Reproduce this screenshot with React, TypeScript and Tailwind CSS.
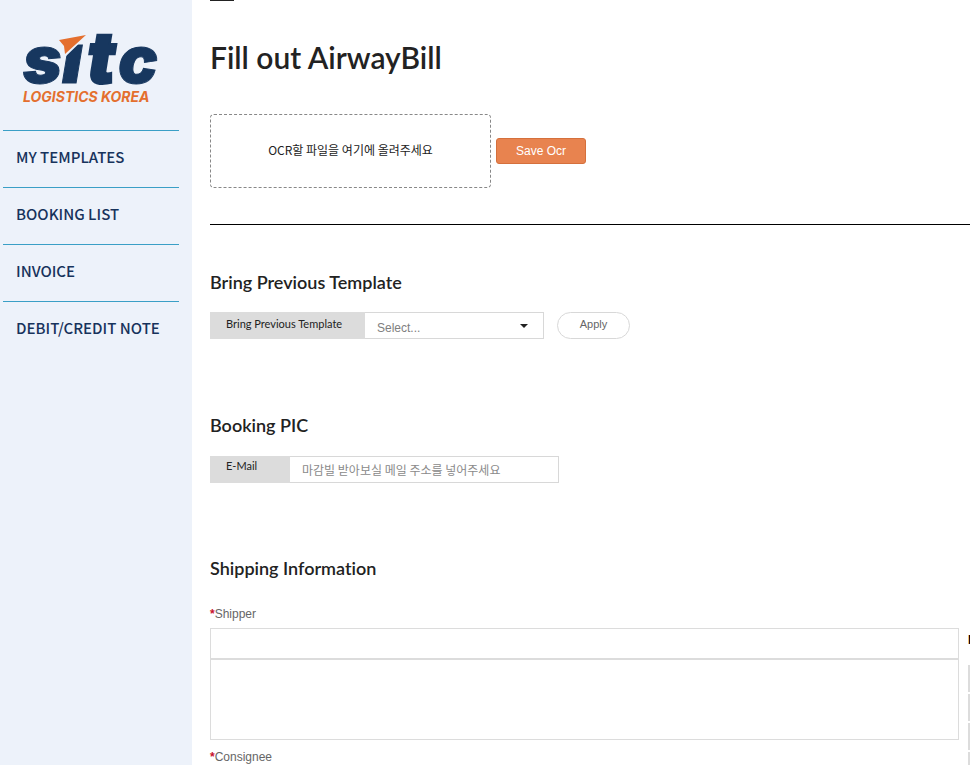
import { useState } from "react";

const menu = [
  { name: "MY TEMPLATES", href: "#templates" },
  { name: "BOOKING LIST", href: "#booking" },
  { name: "INVOICE", href: "#invoice" },
  { name: "DEBIT/CREDIT NOTE", href: "#note" },
];

export default function App() {
  return (
    <div className="flex h-screen overflow-hidden bg-white font-['Lato','Noto_Sans_CJK_KR',sans-serif] text-[#222] [font-variant-ligatures:none]">
      <Sidebar />
      <main className="min-w-0 flex-1 overflow-hidden pl-[18px]">
        <div className="h-px w-6 bg-[#222]" />
        <h1 className="mt-8 text-[30px] leading-[48px] font-semibold">Fill out AirwayBill</h1>
        <OcrUpload />
        <TemplatePicker />
        <BookingPic />
        <ShippingInfo />
      </main>
    </div>
  );
}

const Sidebar = () => {
  return (
    <aside className="w-48 shrink-0 bg-[#edf2fa]">
      <a href="#home" className="block px-5 pt-8" aria-label="SITC Logistics Korea">
        <Logo />
      </a>
      <nav className="mt-[22px] mr-[13px] ml-[3px]">
        {menu.map((item) => (
          <a
            key={item.name}
            href={item.href}
            className="block h-[57px] border-t border-[#3a9fc6] pl-[13px] font-['Noto_Sans_CJK_KR',sans-serif] text-[15px] leading-[52px] font-medium text-[#17335c]"
          >
            {item.name}
          </a>
        ))}
      </nav>
    </aside>
  );
};

const Logo = () => {
  return (
    <svg viewBox="0 0 140 76" className="h-[76px] w-[140px] overflow-visible">
      <g fill="#17375f" stroke="#17375f" strokeWidth="1" fontFamily="Inter, sans-serif" fontWeight="900" fontStyle="italic" fontSize="66">
        <text x="3" y="51">s</text>
        <text x="42" y="51" fontSize="70">ı</text>
        <text x="67" y="51" fontSize="71" strokeWidth="2">t</text>
        <text x="98" y="51">c</text>
      </g>
      <path d="M37 7L70 1L44 26L42 15Z" fill="#edf2fa" />
      <path d="M39 8L66 3L45 22L44 14Z" fill="#e46f2e" />
      <text x="3" y="70" fill="#e46f2e" fontFamily="Inter, sans-serif" fontWeight="700" fontStyle="italic" fontSize="14">
        LOGISTICS KOREA
      </text>
    </svg>
  );
};

const OcrUpload = () => {
  return (
    <section className="border-b border-black pt-[33px] pb-9">
      <div className="flex items-center gap-[5px]">
        <label className="flex h-[74px] w-[281px] cursor-pointer items-center justify-center rounded border border-dashed border-[#888] pb-[2px] font-['Noto_Sans_CJK_KR',sans-serif] text-xs">
          OCR할 파일을 여기에 올려주세요
          <input type="file" className="sr-only" />
        </label>
        <button className="h-[26px] w-[90px] rounded-[3px] border border-[#d5703c] bg-[#e8834f] font-['Liberation_Sans',sans-serif] text-xs text-white">
          Save Ocr
        </button>
      </div>
    </section>
  );
};

const TemplatePicker = () => {
  const [template, setTemplate] = useState("");

  return (
    <section className="pt-[43px]">
      <h2 className="text-lg leading-7 font-semibold">Bring Previous Template</h2>
      <div className="mt-4 flex">
        <label htmlFor="template" className="h-[27px] w-[155px] bg-[#dcdcdc] pl-4 text-[11px] leading-6">
          Bring Previous Template
        </label>
        <div className="relative">
          <select
            id="template"
            value={template}
            onChange={(e) => setTemplate(e.target.value)}
            className="h-[27px] w-[179px] appearance-none border border-l-0 border-[#d8d8d8] bg-white pt-1 pl-3 font-['Liberation_Sans',sans-serif] text-xs text-[#808080]"
          >
            <option value="">Select...</option>
          </select>
          <svg viewBox="0 0 8 4" className="pointer-events-none absolute top-3 right-4 h-1 w-2" fill="#222">
            <path d="M0 0h8L4 4z" />
          </svg>
        </div>
        <button className="ml-[13px] h-[27px] w-[73px] rounded-full border border-[#d8d8d8] pb-[2px] font-['Liberation_Sans',sans-serif] text-[11px] text-[#666]">
          Apply
        </button>
      </div>
    </section>
  );
};

const BookingPic = () => {
  return (
    <section className="pt-[72px]">
      <h2 className="text-lg leading-7 font-semibold">Booking PIC</h2>
      <div className="mt-[17px] flex">
        <label htmlFor="email" className="h-[27px] w-20 bg-[#dcdcdc] pl-4 text-[11px] leading-5">
          E-Mail
        </label>
        <input
          id="email"
          type="email"
          placeholder="마감빌 받아보실 메일 주소를 넣어주세요"
          className="h-[27px] w-[269px] border border-l-0 border-[#d8d8d8] px-3 font-['Noto_Sans_CJK_KR',sans-serif] text-xs placeholder:text-[#8a8a8a]"
        />
      </div>
    </section>
  );
};

const ShippingInfo = () => {
  return (
    <section className="pt-[71px]">
      <h2 className="text-lg leading-7 font-semibold">Shipping Information</h2>
      <div className="mt-[22px] flex gap-[9px] font-['Liberation_Sans',sans-serif]">
        <div className="min-w-0 flex-1">
          <Party id="shipper" label="Shipper" />
          <Party id="consignee" label="Consignee" />
        </div>
        <div className="w-[2px] shrink-0 overflow-hidden pt-7">
          <p className="text-xs leading-4 font-bold text-black">M</p>
          <div className="mt-[17px] flex flex-col gap-[2px]">
            {[1, 2, 3, 4].map((row) => (
              <div key={row} className="h-[27px] bg-[#dcdcdc]" />
            ))}
          </div>
        </div>
      </div>
    </section>
  );
};

const Party = ({ id, label }: { id: string; label: string }) => {
  return (
    <div className="pb-[7px]">
      <label htmlFor={id} className="block pb-1 text-xs leading-5 text-[#666]">
        <span className="font-bold text-[#c8102e]">*</span>
        {label}
      </label>
      <input id={id} className="block h-[31px] w-full border border-[#dcdcdc] px-3 text-xs" />
      <textarea
        aria-label={`${label} address`}
        className="block h-[81px] w-full resize-none border border-[#dcdcdc] px-3 py-2 text-xs"
      />
    </div>
  );
};
